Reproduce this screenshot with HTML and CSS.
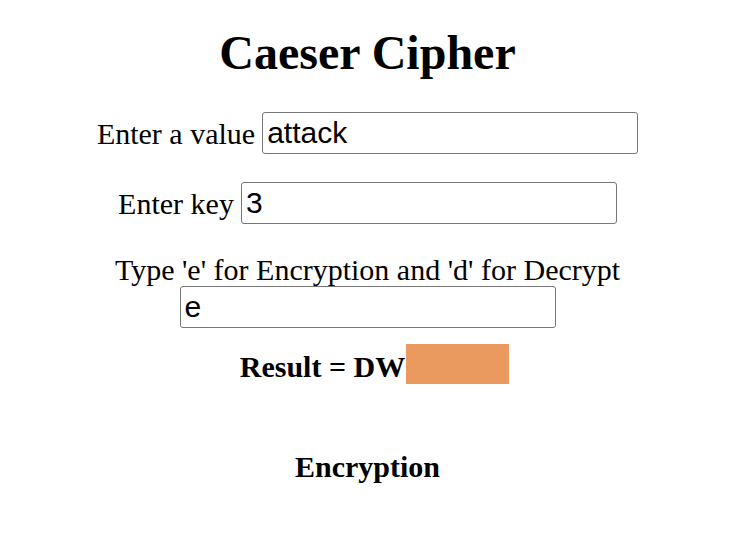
FILE: index.html
```html
<!DOCTYPE html>
<html>
<head>
<meta charset="utf-8">
<title>Caeser Cipher</title>
<link rel="stylesheet" href="styles.css">
</head>
<body>
<main class="page">
  <h1 class="title">Caeser Cipher</h1>
  <div class="row row-first">
    <label class="label" for="val">Enter a value</label>
    <input class="field" id="val" type="text" value="attack">
  </div>
  <div class="row row-second">
    <label class="label" for="key">Enter key</label>
    <input class="field" id="key" type="text" value="3">
  </div>
  <div class="stack">
    <label class="label" for="mode">Type 'e' for Encryption and 'd' for Decrypt</label>
    <input class="field" id="mode" type="text" value="e">
  </div>
  <div class="result"><span class="result-text">Result = DW</span><span class="mask"></span></div>
  <div class="mode">Encryption</div>
</main>
</body>
</html>
```
FILE: styles.css
```css
html, body {
  margin: 0;
  padding: 0;
  background: #ffffff;
}
.page {
  display: flex;
  flex-direction: column;
  align-items: center;
  font-family: "Liberation Serif", "Times New Roman", serif;
  color: #000;
  padding-right: 3px;
}
.title {
  margin: 26px 0 0;
  font-size: 48px;
  font-weight: bold;
  line-height: 53px;
}
.row {
  display: flex;
  align-items: center;
  gap: 7px;
  height: 42px;
}
.row-first {
  margin-top: 33px;
}
.row-second {
  margin-top: 28px;
}
.label {
  font-size: 30px;
  line-height: 33px;
}
.field {
  box-sizing: border-box;
  width: 376px;
  height: 42px;
  margin: 0;
  padding: 0 4px;
  border: 1px solid #767676;
  border-radius: 3px;
  font-family: "Liberation Sans", Arial, sans-serif;
  font-size: 30px;
  color: #000;
  background: #fff;
}
.stack {
  display: flex;
  flex-direction: column;
  align-items: center;
  margin-top: 29px;
}
.result {
  margin-top: 16px;
  margin-left: 14px;
  height: 40px;
  display: flex;
  align-items: flex-end;
  font-size: 30px;
  font-weight: bold;
}
.result-text {
  line-height: 33px;
  margin-bottom: 1px;
}
.mask {
  align-self: stretch;
  width: 103px;
  background: #ea9a5f;
  margin-left: 1px;
}
.mode {
  margin-top: 66px;
  font-size: 30px;
  font-weight: bold;
  line-height: 33px;
}
```
